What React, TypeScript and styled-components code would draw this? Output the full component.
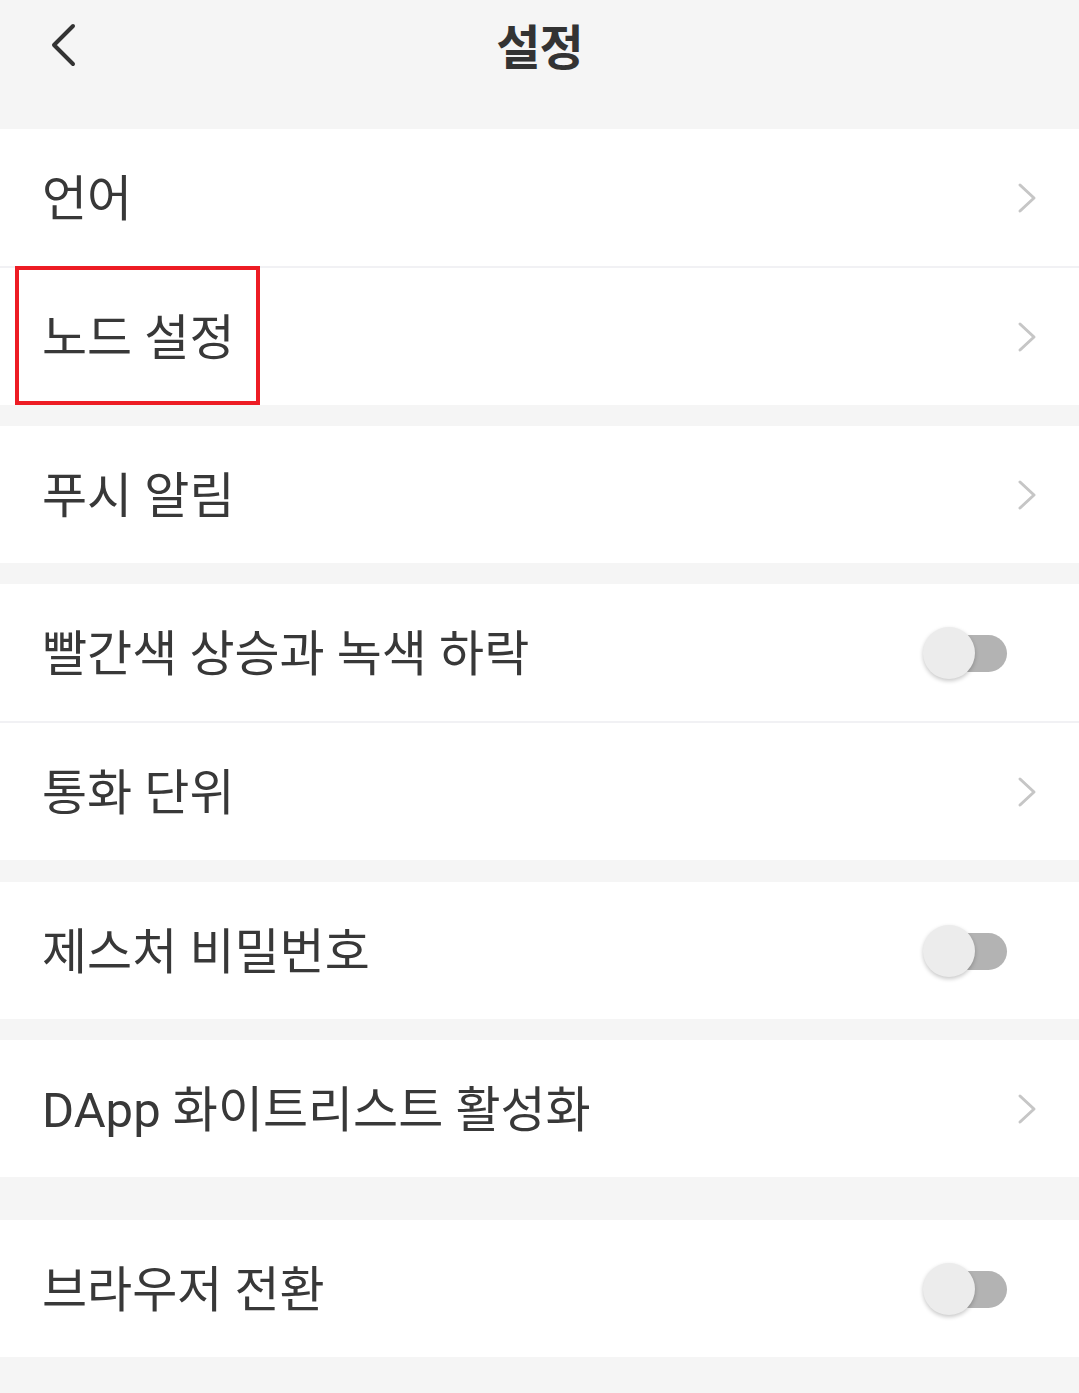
import React from 'react';
import styled, { createGlobalStyle } from 'styled-components';

const GlobalStyle = createGlobalStyle`
	html, body {
		margin: 0;
		padding: 0;
		background: #f5f5f5;
	}
	body {
		font-family: Roboto, "Noto Sans CJK KR", "Noto Sans", sans-serif;
		color: #383838;
	}
`;

const Page = styled.div`
	width: 1079px;
	min-height: 1393px;
	background: #f5f5f5;
`;

const Header = styled.header`
	height: 90px;
	display: grid;
	grid-template-columns: 1fr auto 1fr;
	align-items: center;
`;

const BackButton = styled.button`
	justify-self: start;
	margin-left: 48px;
	padding: 0;
	border: none;
	background: none;
	display: flex;
	align-items: center;
	cursor: pointer;
`;

const Title = styled.h1`
	margin: 0 0 3px;
	font-size: 48px;
	font-weight: 700;
	color: #333;
	letter-spacing: -1px;
`;

const Group = styled.section<{ $top: number }>`
	margin-top: ${(props) => props.$top}px;
	background: #fff;
	display: flex;
	flex-direction: column;
`;

const Divider = styled.div`
	height: 2px;
	background: #f1f1f4;
`;

const Row = styled.div`
	height: 137px;
	display: flex;
	align-items: center;
	justify-content: space-between;
	padding: 0 42px 0 42px;
	position: relative;
`;

const Label = styled.span<{ $highlighted?: boolean }>`
	font-size: 49px;
	line-height: 1;
	padding-top: 4px;
	color: #383838;

	${(props) =>
		props.$highlighted &&
		`
		&::after {
			content: '';
			position: absolute;
			left: 15px;
			top: -2px;
			width: 237px;
			height: 131px;
			border: 4px solid #ed1c24;
		}
	`}
`;

const Switch = styled.span`
	position: relative;
	width: 84px;
	height: 52px;
	margin-right: 30px;
`;

const Track = styled.span`
	position: absolute;
	right: 0;
	top: 8px;
	width: 78px;
	height: 37px;
	border-radius: 19px;
	background: #b3b3b3;
`;

const Thumb = styled.span`
	position: absolute;
	left: 0;
	top: 0;
	width: 52px;
	height: 52px;
	border-radius: 50%;
	background: #ececec;
	box-shadow: 0 2px 4px rgba(0, 0, 0, 0.22);
`;

const Chevron = () => (
	<svg width="20" height="32" viewBox="0 0 20 32" fill="none">
		<path d="M3 3 L17 16 L3 29" stroke="#c6c6c6" strokeWidth="3" strokeLinecap="round" strokeLinejoin="round" />
	</svg>
);

const Toggle = () => (
	<Switch>
		<Track />
		<Thumb />
	</Switch>
);

type Item = { label: string; toggle?: boolean; highlighted?: boolean };

const groups: { top: number; items: Item[] }[] = [
	{ top: 39, items: [{ label: '언어' }, { label: '노드 설정', highlighted: true }] },
	{ top: 21, items: [{ label: '푸시 알림' }] },
	{ top: 21, items: [{ label: '빨간색 상승과 녹색 하락', toggle: true }, { label: '통화 단위' }] },
	{ top: 22, items: [{ label: '제스처 비밀번호', toggle: true }] },
	{ top: 21, items: [{ label: 'DApp 화이트리스트 활성화' }] },
	{ top: 43, items: [{ label: '브라우저 전환', toggle: true }] },
];

export default function App() {
	return (
		<Page>
			<GlobalStyle />
			<Header>
				<BackButton aria-label="back">
					<svg width="30" height="44" viewBox="0 0 30 44" fill="none">
						<path d="M25 3 L6 22 L25 41" stroke="#333" strokeWidth="4" strokeLinecap="round" strokeLinejoin="round" />
					</svg>
				</BackButton>
				<Title>설정</Title>
				<span />
			</Header>

			{groups.map((group, gi) => (
				<Group key={gi} $top={group.top}>
					{group.items.map((item, ii) => (
						<React.Fragment key={item.label}>
							{ii > 0 && <Divider />}
							<Row>
								<Label $highlighted={item.highlighted}>{item.label}</Label>
								{item.toggle ? <Toggle /> : <Chevron />}
							</Row>
						</React.Fragment>
					))}
				</Group>
			))}
		</Page>
	);
}
